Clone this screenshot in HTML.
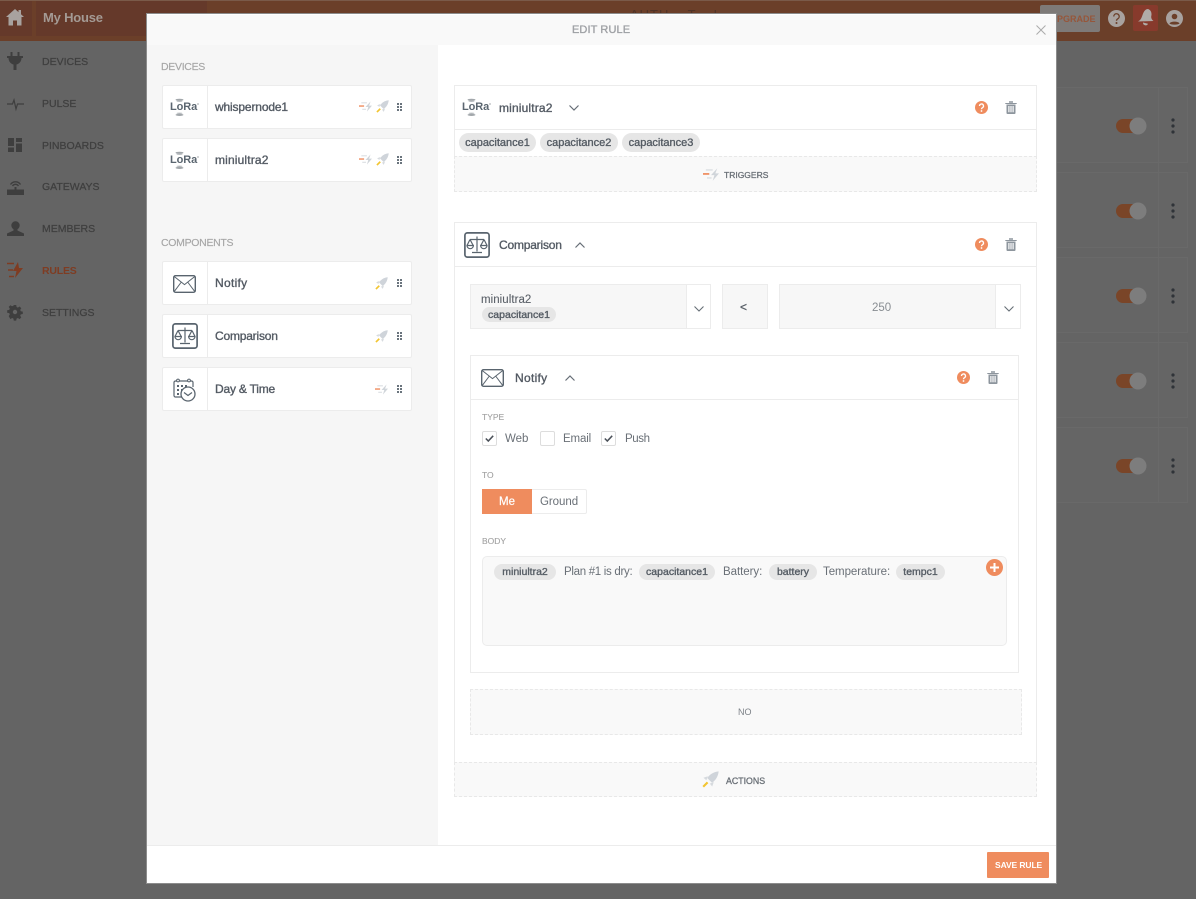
<!DOCTYPE html>
<html lang="en"><head><meta charset="utf-8"><title>Edit Rule</title>
<style>
*{box-sizing:border-box}
html,body{margin:0;padding:0;width:1196px;height:899px;overflow:hidden;background:#646464}
body{position:relative;font-family:"Liberation Sans",sans-serif;color:#5a6068}
.a{position:absolute}
.t{position:absolute;white-space:nowrap;line-height:16px;height:16px}
.nav{font-size:10.5px;color:#3f3f3f;-webkit-text-stroke:.25px}
.card{position:absolute;left:15px;width:250px;height:44px;background:#fff;border:1px solid #ececec;border-radius:2px}
.card i{position:absolute;left:44px;top:0;bottom:0;width:1px;background:#ececec}
.name{font-size:12px;color:#535a63;letter-spacing:-.15px;-webkit-text-stroke:.35px}
.lab{font-size:10.5px;color:#a6a6a6;letter-spacing:-.3px;-webkit-text-stroke:.15px}
.chip{position:absolute;height:19px;line-height:20px;border-radius:10px;background:#e6e6e6;font-size:11px;color:#555c64;text-align:center;-webkit-text-stroke:.35px;white-space:nowrap}
.box{position:absolute;border:1px solid #ececec;background:#fff}
.dash{position:absolute;border:1px dashed #e8e8e8;background:#f9f9f9}
.sm{font-size:8.5px;color:#a0a0a0;-webkit-text-stroke:.1px}
.cb{position:absolute;top:431px;width:15px;height:15px;background:#fff;border:1px solid #ddd;border-radius:2px}
.bg{position:absolute;left:1056px;width:132px;height:76px;border:1px solid #696969;background:#656565}
.logo{position:absolute;font-size:11px;font-weight:bold;color:#5b6670;line-height:16px;height:16px;white-space:nowrap;letter-spacing:-.1px}
svg{position:absolute;display:block;overflow:visible}
</style></head><body>

<svg width="0" height="0" style="position:absolute"><defs>
<symbol id="trig" viewBox="0 0 14 11"><path d="M2.5 1.500h6M3.500 8.500h4" stroke="#dcdfe3" stroke-width="1.200"/><path d="M0 5h5.500" stroke="#ef8c5e" stroke-width="1.500"/><path d="M12.500 0 7 6h3L8.500 11 14 4.500h-3.200z" fill="#d0d5da"/></symbol>
<symbol id="rock" viewBox="0 0 14 14"><path d="M13.700.3C10 .6 6.500 2.500 4.300 5.800L8.200 9.700C11.500 7.500 13.400 4 13.700.3z" fill="#cfd4da"/><path d="M4.800 4.300 1.200 5.600 3.600 7.600zM9.700 9.200 8.400 12.800 6.400 10.400z" fill="#d6dade"/><path d="M4.600 9.400 1 13" stroke="#f2c531" stroke-width="1.800"/></symbol>
<symbol id="grip" viewBox="0 0 5 8"><path d="M0 0h2v2H0zM3 0h2v2H3zM0 3h2v2H0zM3 3h2v2H3zM0 6h2v2H0zM3 6h2v2H3z" fill="#6a747d"/></symbol>
<symbol id="mail" viewBox="0 0 23 18"><rect x=".7" y=".7" width="21.600" height="16.600" rx="1.800" fill="none" stroke="#59646e" stroke-width="1.400"/><path d="M1.200 1.500 11.500 9.600 21.800 1.500M1.200 16.600 8 7.500M21.800 16.600 15 7.500" fill="none" stroke="#59646e" stroke-width="1"/></symbol>
<symbol id="scale" viewBox="0 0 26 26"><rect x=".9" y=".9" width="24.200" height="24.200" rx="2.500" fill="none" stroke="#59646e" stroke-width="1.700"/><path d="M13 4.500v15M8 20.500h10M6 7.500h14M6 7.500 3 13.500M6 7.500 9.200 13.500M20 7.500 16.800 13.500M20 7.500 23 13.500" fill="none" stroke="#59646e" stroke-width="1.200"/><path d="M3 13.500a3.200 3.200 0 0 0 6.400 0zM16.600 13.500a3.200 3.200 0 0 0 6.400 0z" fill="none" stroke="#59646e" stroke-width="1.200"/></symbol>
<symbol id="cal" viewBox="0 0 24 24"><path d="M10 19H2.500A1.500 1.500 0 0 1 1 17.500V4.500A1.500 1.500 0 0 1 2.500 3h16A1.500 1.500 0 0 1 20 4.500V9" fill="none" stroke="#59646e" stroke-width="1.200"/><circle cx="5" cy="2.500" r="1.400" fill="#fff" stroke="#59646e"/><circle cx="16" cy="2.500" r="1.400" fill="#fff" stroke="#59646e"/><path d="M4 7h2v2H4zM8 7h2v2H8zM12 7h2v2h-2zM4 11h2v2H4zM8 11h2v2H8zM4 15h2v2H4z" fill="#59646e"/><circle cx="15" cy="16" r="7" fill="#fff" stroke="#59646e" stroke-width="1.300"/><path d="M11 14.500 15 17.500 19 14.500" fill="none" stroke="#59646e" stroke-width="1.200"/></symbol>
<symbol id="trash" viewBox="0 0 12 13"><path d="M.3 2h11.400v1H.3zM4 .3h4v1.500H4z" fill="#8d959d"/><path d="M1.500 3.500h9V12a1 1 0 0 1-1 1h-7a1 1 0 0 1-1-1z" fill="#8d959d"/><path d="M3.300 5v6.300h1.200V5zM5.400 5v6.300h1.200V5zM7.500 5v6.300h1.200V5z" fill="#fff"/></symbol>
<symbol id="lora" viewBox="0 0 30 20"><ellipse cx="9.500" cy="1.800" rx="4" ry="1.100" fill="#a2a7ab"/><ellipse cx="9.500" cy="3.300" rx="3" ry=".7" fill="#b9bdc0"/><ellipse cx="9.500" cy="15.300" rx="3" ry=".7" fill="#b9bdc0"/><ellipse cx="9.500" cy="16.900" rx="4" ry="1.100" fill="#a2a7ab"/><path d="M27 6h2" stroke="#9da2a6" stroke-width=".9"/></symbol>
<symbol id="q" viewBox="0 0 13 13"><circle cx="6.500" cy="6.500" r="6.500" fill="#ef8c5e"/><path d="M4.500 5a2 2 0 1 1 3 1.700c-.7.400-1 .8-1 1.500" fill="none" stroke="#fff" stroke-width="1.300"/><circle cx="6.500" cy="10" r=".9" fill="#fff"/></symbol>
</defs></svg>

<!-- dimmed app -->
<div class="a" style="left:0;top:0;width:1196px;height:41px;background:#6b3f29"></div>
<div class="a" style="left:0;top:0;width:1196px;height:1px;background:#7a5a49"></div>
<div class="a" style="left:0;top:1px;width:32px;height:35px;background:#65392a"></div>
<div class="a" style="left:36px;top:1px;width:171px;height:35px;background:#65392a"></div>
<svg style="left:6px;top:9px" width="18" height="17" viewBox="0 0 18 17"><path d="M9 0 0 8h2.500v8.500h4.500v-5h4v5h4.500V8H18l-3-2.700V1h-2.500v2.100z" fill="#a8a29f"/></svg>
<div class="t" style="left:43px;top:10px;font-size:13px;font-weight:bold;color:#a49a94;letter-spacing:-.2px">My House</div>
<div class="a" style="left:1040px;top:5px;width:60px;height:27px;background:#7e7a78;border-radius:2px"></div>
<div class="t" style="left:1057px;top:11px;font-size:9px;font-weight:bold;color:#96563a">PGRADE</div>
<svg style="left:1108px;top:10px" width="17" height="17" viewBox="0 0 17 17"><circle cx="8.500" cy="8.500" r="8.500" fill="#a8a29f"/><path d="M5.800 6.500a2.700 2.700 0 1 1 4 2.300c-.9.500-1.300 1-1.300 2" fill="none" stroke="#6b3f29" stroke-width="1.300"/><circle cx="8.500" cy="13" r="1" fill="#6b3f29"/></svg>
<div class="a" style="left:1133px;top:5px;width:25px;height:26px;background:#873a2c;border-radius:2px"></div>
<svg style="left:1136px;top:8px" width="19" height="19" viewBox="0 0 19 19"><path d="M12 1c3 1 4 4 3.300 7-.4 2 .4 3.500 2.200 5L2 13.500c2-1 3-2.500 4-5C7 5.500 8.500 1 12 1zM7 14.500l5 1.200a2.600 2.600 0 0 1-5-1.200z" fill="#b0aba8"/></svg>
<svg style="left:1166px;top:10px" width="17" height="17" viewBox="0 0 17 17"><circle cx="8.500" cy="8.500" r="8.500" fill="#a8a29f"/><circle cx="8.500" cy="6.500" r="2.800" fill="#6b3f29"/><path d="M3.500 13.500c1-2.500 9-2.500 10 0-1.500 1.500-8.500 1.500-10 0z" fill="#6b3f29"/></svg>

<!-- sidebar -->
<svg style="left:7px;top:52px" width="16" height="18" viewBox="0 0 16 18"><path d="M3.500 0h2v4h5V0h2v4H16v2h-1.500c0 3.500-2.500 6-5 6.500V18h-3v-5.500c-2.500-.5-5-3-5-6.500H0V4h3.500z" fill="#3e3e3e"/></svg>
<svg style="left:7px;top:98px" width="17" height="12" viewBox="0 0 17 12"><path d="M0 6h5.500l1.500-4 2 9 1.500-5H17" fill="none" stroke="#3e3e3e" stroke-width="1.200"/></svg>
<svg style="left:8px;top:138px" width="14" height="14" viewBox="0 0 14 14"><path d="M0 0h6v8H0zM8 0h6v4H8zM8 5.500h6V14H8zM0 9.500h6V14H0z" fill="#3e3e3e"/></svg>
<svg style="left:7px;top:179px" width="17" height="16" viewBox="0 0 17 16"><path d="M3.500 5.500a6 6 0 0 1 10 0M5.500 7a3.500 3.500 0 0 1 6 0" fill="none" stroke="#3e3e3e" stroke-width="1.300"/><path d="M7.500 8h2v3h-2zM0 10.500h17V16H0z" fill="#3e3e3e"/></svg>
<svg style="left:7px;top:221px" width="17" height="15" viewBox="0 0 17 15"><circle cx="8.500" cy="4.500" r="4.200" fill="#3e3e3e"/><path d="M6.500 8h4v1.500l6.500 3V15H0v-2.500l6.500-3z" fill="#3e3e3e"/></svg>
<svg style="left:7px;top:262px" width="16" height="16" viewBox="0 0 16 16"><path d="M0 1.500h7M1 8h5M2 14.500h5" stroke="#7f3c22" stroke-width="1.500"/><path d="M11 0 6 9h3.500L8 16l8-10h-4z" fill="#7f3c22"/></svg>
<svg style="left:8px;top:305px" width="14" height="14" viewBox="0 0 14 14"><path d="M5.800 0h2.400l.4 2 1.300.6L11.600 1.500l1.700 1.700-1.100 1.700.6 1.300 2 .4v2.400l-2 .4-.6 1.300 1.100 1.700-1.700 1.700-1.700-1.100-1.300.6-.4 2H5.800l-.4-2-1.300-.6-1.700 1.100L.7 11.100l1.100-1.700-.6-1.300-2-.4V5.300l2-.4.6-1.300L.7 1.900 2.400.2l1.700 1.100 1.300-.6zM7 4.800a2.200 2.200 0 1 0 0 4.400 2.200 2.200 0 0 0 0-4.400z" fill="#3e3e3e" fill-rule="evenodd"/></svg>
<div class="t nav" style="left:42px;top:54px">DEVICES</div>
<div class="t nav" style="left:42px;top:96px">PULSE</div>
<div class="t nav" style="left:42px;top:138px">PINBOARDS</div>
<div class="t nav" style="left:42px;top:179px">GATEWAYS</div>
<div class="t nav" style="left:42px;top:221px">MEMBERS</div>
<div class="t nav" style="left:42px;top:263px;color:#7f3c22;font-weight:bold;font-size:10.5px;-webkit-text-stroke:0;letter-spacing:-.2px">RULES</div>
<div class="t nav" style="left:42px;top:305px">SETTINGS</div>

<!-- right side background cards -->
<div class="bg" style="top:87px"></div><div class="bg" style="top:172px"></div><div class="bg" style="top:257px"></div><div class="bg" style="top:342px"></div><div class="bg" style="top:427px"></div>
<div class="a" style="left:1158px;top:87px;width:1px;height:416px;background:#696969"></div>
<svg style="left:1110px;top:110px" width="80" height="370" viewBox="0 0 80 370">
<g id="sw"><rect x="6" y="9" width="28" height="14" rx="7" fill="#7a4528"/><circle cx="28" cy="16" r="8.500" fill="#7d7d7d"/><circle cx="63" cy="10" r="1.600" fill="#2f3338"/><circle cx="63" cy="16" r="1.600" fill="#2f3338"/><circle cx="63" cy="22" r="1.600" fill="#2f3338"/></g>
<use href="#sw" y="85"/><use href="#sw" y="170"/><use href="#sw" y="255"/><use href="#sw" y="340"/>
</svg>
<div class="t" style="left:630px;top:7px;font-size:13px;color:#4f3327;letter-spacing:1px">AUTH... T... I...</div>

<!-- modal -->
<div class="a" style="left:147px;top:14px;width:909px;height:869px;background:#fff;box-shadow:0 0 0 1px #8c8c8c"></div>
<div class="a" style="left:147px;top:15px;width:909px;height:30px;background:#f9f9f9"></div>
<div class="t" style="left:572px;top:22px;font-size:11px;color:#9fa1a5;-webkit-text-stroke:.35px;letter-spacing:.1px">EDIT RULE</div>
<svg style="left:1036px;top:25px" width="10" height="10" viewBox="0 0 10 10"><path d="M.5.500l9 9M9.500.500l-9 9" stroke="#aaa" stroke-width="1"/></svg>
<div class="a" style="left:147px;top:45px;width:291px;height:800px;background:#f6f6f6"></div>
<div class="a" style="left:147px;top:845px;width:909px;height:1px;background:#ececec"></div>
<div class="a" style="left:987px;top:852px;width:62px;height:26px;background:#ef8c5e;border-radius:1px"></div>
<div class="t" style="left:995px;top:857px;font-size:8.500px;font-weight:bold;color:#fff;letter-spacing:-.1px">SAVE RULE</div>

<!-- left palette -->
<div class="t lab" style="left:161px;top:59px">DEVICES</div>
<div class="t lab" style="left:161px;top:235px">COMPONENTS</div>

<div class="card" style="left:162px;top:85px"><i></i></div>
<div class="card" style="left:162px;top:138px"><i></i></div>
<div class="card" style="left:162px;top:261px"><i></i></div>
<div class="card" style="left:162px;top:314px"><i></i></div>
<div class="card" style="left:162px;top:367px"><i></i></div>

<svg style="left:170px;top:98px" width="30" height="20" viewBox="0 0 30 20"><use href="#lora" width="30" height="20"/></svg>
<div class="logo" style="left:170px;top:99px">LoRa</div>
<svg style="left:170px;top:151px" width="30" height="20" viewBox="0 0 30 20"><use href="#lora" width="30" height="20"/></svg>
<div class="logo" style="left:170px;top:152px">LoRa</div>
<svg style="left:173px;top:275px" width="23" height="18"><use href="#mail" width="23" height="18"/></svg>
<svg style="left:172px;top:323px" width="26" height="26"><use href="#scale" width="26" height="26"/></svg>
<svg style="left:173px;top:378px" width="24" height="24"><use href="#cal" width="24" height="24"/></svg>

<div class="t name" style="left:215px;top:99px">whispernode1</div>
<div class="t name" style="left:215px;top:152px;letter-spacing:.15px">miniultra2</div>
<div class="t name" style="left:215px;top:275px;letter-spacing:.3px">Notify</div>
<div class="t name" style="left:215px;top:328px;letter-spacing:-.2px">Comparison</div>
<div class="t name" style="left:215px;top:381px;letter-spacing:-.2px">Day &amp; Time</div>

<svg style="left:359px;top:101px" width="13" height="11"><use href="#trig" width="13" height="11"/></svg>
<svg style="left:376px;top:100px" width="13" height="13"><use href="#rock" width="13" height="13"/></svg>
<svg style="left:397px;top:103px" width="5" height="8"><use href="#grip" width="5" height="8"/></svg>
<svg style="left:359px;top:154px" width="13" height="11"><use href="#trig" width="13" height="11"/></svg>
<svg style="left:376px;top:153px" width="13" height="13"><use href="#rock" width="13" height="13"/></svg>
<svg style="left:397px;top:156px" width="5" height="8"><use href="#grip" width="5" height="8"/></svg>
<svg style="left:375px;top:277px" width="13" height="13"><use href="#rock" width="13" height="13"/></svg>
<svg style="left:397px;top:279px" width="5" height="8"><use href="#grip" width="5" height="8"/></svg>
<svg style="left:375px;top:330px" width="13" height="13"><use href="#rock" width="13" height="13"/></svg>
<svg style="left:397px;top:332px" width="5" height="8"><use href="#grip" width="5" height="8"/></svg>
<svg style="left:375px;top:384px" width="13" height="11"><use href="#trig" width="13" height="11"/></svg>
<svg style="left:397px;top:385px" width="5" height="8"><use href="#grip" width="5" height="8"/></svg>

<!-- trigger block -->
<div class="box" style="left:454px;top:85px;width:583px;height:107px"></div>
<div class="a" style="left:455px;top:129px;width:581px;height:1px;background:#ececec"></div>
<svg style="left:462px;top:98px" width="30" height="20" viewBox="0 0 30 20"><use href="#lora" width="30" height="20"/></svg>
<div class="logo" style="left:462px;top:99px">LoRa</div>
<div class="t name" style="left:499px;top:100px;letter-spacing:.15px">miniultra2</div>
<svg style="left:569px;top:105px" width="10" height="6" viewBox="0 0 10 6"><path d="M.5.500 5 5 9.500.500" fill="none" stroke="#666e76" stroke-width="1.200"/></svg>
<div class="chip" style="left:459px;top:133px;width:77px">capacitance1</div>
<div class="chip" style="left:540px;top:133px;width:78px">capacitance2</div>
<div class="chip" style="left:622px;top:133px;width:78px">capacitance3</div>
<div class="dash" style="left:454px;top:156px;width:583px;height:36px"></div>
<svg style="left:703px;top:168px" width="16" height="13"><use href="#trig" width="16" height="13"/></svg>
<div class="t" style="left:724px;top:167px;font-size:8.500px;color:#6a7077;-webkit-text-stroke:.3px">TRIGGERS</div>

<!-- comparison block -->
<div class="box" style="left:454px;top:222px;width:583px;height:575px"></div>
<div class="a" style="left:455px;top:266px;width:581px;height:1px;background:#ececec"></div>
<svg style="left:464px;top:232px" width="26" height="26"><use href="#scale" width="26" height="26"/></svg>
<div class="t name" style="left:499px;top:237px;letter-spacing:-.2px">Comparison</div>
<svg style="left:575px;top:242px" width="10" height="6" viewBox="0 0 10 6"><path d="M.5 5.500 5 1l4.500 4.500" fill="none" stroke="#666e76" stroke-width="1.200"/></svg>

<!-- help/trash icons -->
<svg style="left:975px;top:101px" width="13" height="13"><use href="#q" width="13" height="13"/></svg>
<svg style="left:1005px;top:101px" width="12" height="13"><use href="#trash" width="12" height="13"/></svg>
<svg style="left:975px;top:238px" width="13" height="13"><use href="#q" width="13" height="13"/></svg>
<svg style="left:1005px;top:238px" width="12" height="13"><use href="#trash" width="12" height="13"/></svg>

<!-- comparison selects -->
<div class="box" style="left:470px;top:284px;width:241px;height:45px"></div>
<div class="a" style="left:471px;top:285px;width:216px;height:43px;background:#f7f7f7;border-right:1px solid #ececec"></div>
<div class="t" style="left:481px;top:292px;font-size:11.500px;color:#5a6068;letter-spacing:.05px;-webkit-text-stroke:.1px">miniultra2</div>
<div class="chip" style="left:482px;top:307px;width:74px;height:15px;line-height:16px;font-size:10.500px">capacitance1</div>
<svg style="left:694px;top:306px" width="10" height="6" viewBox="0 0 10 6"><path d="M.5.500 5 5 9.500.500" fill="none" stroke="#666e76" stroke-width="1.100"/></svg>
<div class="box" style="left:722px;top:284px;width:46px;height:45px;background:#f7f7f7"></div>
<div class="t" style="left:740px;top:299px;font-size:12px;color:#555c64;-webkit-text-stroke:.3px">&lt;</div>
<div class="box" style="left:779px;top:284px;width:242px;height:45px"></div>
<div class="a" style="left:780px;top:285px;width:216px;height:43px;background:#f7f7f7;border-right:1px solid #ececec"></div>
<div class="t" style="left:872px;top:300px;font-size:11.500px;color:#888d92">250</div>
<svg style="left:1004px;top:306px" width="10" height="6" viewBox="0 0 10 6"><path d="M.5.500 5 5 9.500.500" fill="none" stroke="#666e76" stroke-width="1.100"/></svg>

<!-- notify block -->
<div class="box" style="left:470px;top:355px;width:549px;height:318px"></div>
<div class="a" style="left:471px;top:399px;width:547px;height:1px;background:#ececec"></div>
<svg style="left:481px;top:369px" width="23" height="18"><use href="#mail" width="23" height="18"/></svg>
<div class="t name" style="left:515px;top:370px;letter-spacing:.3px">Notify</div>
<svg style="left:565px;top:375px" width="10" height="6" viewBox="0 0 10 6"><path d="M.5 5.500 5 1l4.500 4.500" fill="none" stroke="#666e76" stroke-width="1.200"/></svg>
<svg style="left:957px;top:371px" width="13" height="13"><use href="#q" width="13" height="13"/></svg>
<svg style="left:987px;top:371px" width="12" height="13"><use href="#trash" width="12" height="13"/></svg>

<div class="t sm" style="left:482px;top:409px">TYPE</div>
<div class="cb" style="left:482px"></div><div class="cb" style="left:540px"></div><div class="cb" style="left:601px"></div>
<svg style="left:485px;top:435px" width="9" height="7" viewBox="0 0 9 7"><path d="M.8 3.500 3.300 6 8.200.800" fill="none" stroke="#4a5058" stroke-width="1.500"/></svg>
<svg style="left:604px;top:435px" width="9" height="7" viewBox="0 0 9 7"><path d="M.8 3.500 3.300 6 8.200.800" fill="none" stroke="#4a5058" stroke-width="1.500"/></svg>
<div class="t" style="left:505px;top:431px;font-size:11.500px;color:#6a7077">Web</div>
<div class="t" style="left:563px;top:431px;font-size:11.500px;color:#6a7077;letter-spacing:-.15px">Email</div>
<div class="t" style="left:625px;top:431px;font-size:11.500px;color:#6a7077;letter-spacing:-.4px">Push</div>

<div class="t sm" style="left:482px;top:467px">TO</div>
<div class="a" style="left:482px;top:489px;width:105px;height:25px;border:1px solid #ececec;background:#fff;border-radius:2px"></div>
<div class="a" style="left:482px;top:489px;width:50px;height:25px;background:#ef8c5e"></div>
<div class="t" style="left:499px;top:494px;font-size:11.500px;color:#fff;-webkit-text-stroke:.2px">Me</div>
<div class="t" style="left:540px;top:494px;font-size:11.500px;color:#6a7077;letter-spacing:-.05px">Ground</div>

<div class="t sm" style="left:482px;top:533px">BODY</div>
<div class="a" style="left:482px;top:556px;width:525px;height:90px;background:#f9f9f9;border:1px solid #ececec;border-radius:5px"></div>
<div class="chip" style="left:494px;top:564px;width:62px;height:16px;line-height:17px;font-size:10.500px">miniultra2</div>
<div class="t" style="left:564px;top:564px;font-size:11.500px;color:#6a7077;letter-spacing:-.3px">Plan #1 is dry:</div>
<div class="chip" style="left:639px;top:564px;width:76px;height:16px;line-height:17px;font-size:10.500px">capacitance1</div>
<div class="t" style="left:723px;top:564px;font-size:11.500px;color:#6a7077;letter-spacing:-.05px">Battery:</div>
<div class="chip" style="left:769px;top:564px;width:48px;height:16px;line-height:17px;font-size:10.500px">battery</div>
<div class="t" style="left:823px;top:564px;font-size:11.500px;color:#6a7077;letter-spacing:-.05px">Temperature:</div>
<div class="chip" style="left:896px;top:564px;width:49px;height:16px;line-height:17px;font-size:10.500px">tempc1</div>
<svg style="left:986px;top:559px" width="17" height="17" viewBox="0 0 17 17"><circle cx="8.500" cy="8.500" r="8.500" fill="#ef8c5e"/><path d="M8.500 4v9M4 8.500h9" stroke="#fff" stroke-width="2"/></svg>

<div class="dash" style="left:470px;top:689px;width:552px;height:46px"></div>
<div class="t" style="left:738px;top:704px;font-size:9px;color:#7d8288">NO</div>

<div class="dash" style="left:454px;top:762px;width:583px;height:35px"></div>
<svg style="left:702px;top:771px" width="17" height="17"><use href="#rock" width="17" height="17"/></svg>
<div class="t" style="left:726px;top:773px;font-size:8.800px;color:#6a7077;-webkit-text-stroke:.3px">ACTIONS</div>

</body></html>
